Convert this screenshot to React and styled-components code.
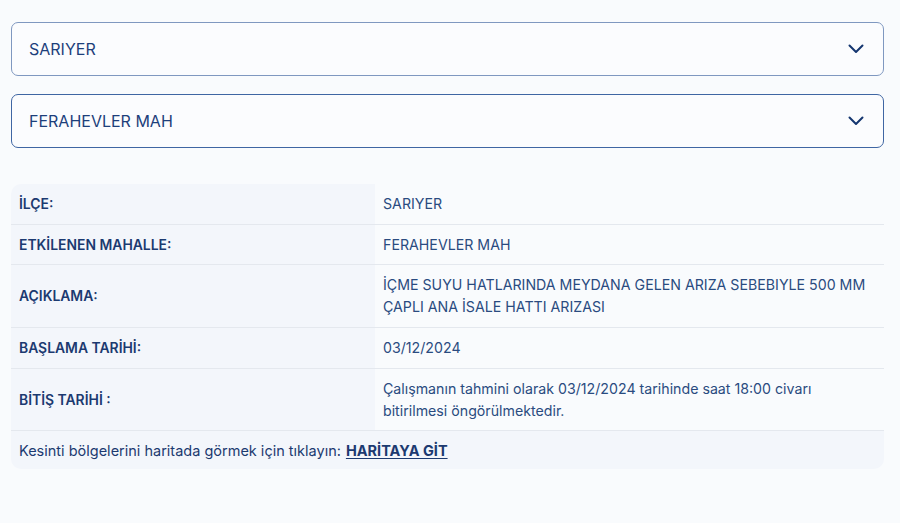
import React from "react";
import styled, { createGlobalStyle } from "styled-components";

const Global = createGlobalStyle`
  html, body {
    margin: 0;
    padding: 0;
    background: #f9fbfd;
  }
  body {
    font-family: Inter, "Noto Sans", sans-serif;
    color: #1d3c73;
  }
`;

const Page = styled.div`
  width: 900px;
  height: 523px;
  box-sizing: border-box;
  padding: 22px 16px 0 11px;
  display: flex;
  flex-direction: column;
`;

const Selects = styled.div`
  display: flex;
  flex-direction: column;
  gap: 18px;
  margin-bottom: 36px;
`;

const SelectBox = styled.div`
  height: 54px;
  box-sizing: border-box;
  border: 1.5px solid ${(p) => (p.$active ? "#3f66a3" : "#7f98c0")};
  border-radius: 7px;
  background: #fbfcfe;
  display: flex;
  align-items: center;
  justify-content: space-between;
  padding: 0 19px 0 17px;
  font-size: 16px;
  color: #1d3f7b;
`;

const Table = styled.div`
  border-radius: 10px;
  overflow: hidden;
`;

const Row = styled.div`
  display: grid;
  grid-template-columns: 364px 1fr;
  min-height: ${(p) => p.$h}px;
  border-top: ${(p) => (p.$first ? "none" : "1.5px solid #e4e8ee")};
  box-sizing: border-box;
`;

const Label = styled.div`
  background: #f3f6fb;
  display: flex;
  align-items: center;
  padding: 0 8px;
  font-size: 13.9px;
  font-weight: 600;
  color: #1c3a70;
`;

const Value = styled.div`
  background: #f9fbfd;
  display: flex;
  align-items: center;
  padding: 8px 14px 8px 8px;
  font-size: 14.2px;
  line-height: 22px;
  color: #2a4b80;
`;

const Footer = styled.div`
  background: #f3f6fb;
  border-top: 1.5px solid #e4e8ee;
  height: 39px;
  box-sizing: border-box;
  display: flex;
  align-items: center;
  padding: 0 8px;
  font-size: 14.5px;
  color: #1c3a70;
`;

const MapLink = styled.a`
  margin-left: 5px;
  font-weight: 700;
  color: #1c3a70;
  text-decoration: underline;
  text-underline-offset: 2px;
`;

const Chevron = () => (
  <svg width="16" height="10" viewBox="0 0 16 10" fill="none">
    <path d="M1.5 1.5 8 8l6.5-6.5" stroke="#143670" strokeWidth="2" strokeLinecap="round" strokeLinejoin="round" />
  </svg>
);

const rows = [
  { label: "İLÇE:", value: "SARIYER", h: 40 },
  { label: "ETKİLENEN MAHALLE:", value: "FERAHEVLER MAH", h: 40 },
  {
    label: "AÇIKLAMA:",
    value: "İÇME SUYU HATLARINDA MEYDANA GELEN ARIZA SEBEBIYLE 500 MM ÇAPLI ANA İSALE HATTI ARIZASI",
    h: 63,
  },
  { label: "BAŞLAMA TARİHİ:", value: "03/12/2024", h: 41 },
  {
    label: "BİTİŞ TARİHİ :",
    value: "Çalışmanın tahmini olarak 03/12/2024 tarihinde saat 18:00 civarı bitirilmesi öngörülmektedir.",
    h: 62,
  },
];

export default function App() {
  return (
    <>
      <Global />
      <Page>
        <Selects>
          <SelectBox>
            <span>SARIYER</span>
            <Chevron />
          </SelectBox>
          <SelectBox $active>
            <span>FERAHEVLER MAH</span>
            <Chevron />
          </SelectBox>
        </Selects>
        <Table>
          {rows.map((r, i) => (
            <Row key={r.label} $h={r.h} $first={i === 0}>
              <Label>{r.label}</Label>
              <Value>{r.value}</Value>
            </Row>
          ))}
          <Footer>
            Kesinti bölgelerini haritada görmek için tıklayın:
            <MapLink href="#">HARİTAYA GİT</MapLink>
          </Footer>
        </Table>
      </Page>
    </>
  );
}
